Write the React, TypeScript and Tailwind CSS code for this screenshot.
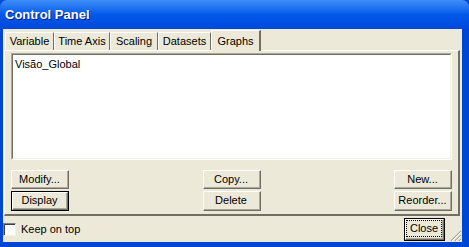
import React from "react";

const tabs = [
  { label: "Variable", w: "w-[49px]" },
  { label: "Time Axis", w: "w-[56px]" },
  { label: "Scaling", w: "w-[48px]" },
  { label: "Datasets", w: "w-[53px]" },
];

function Btn({ children, isDefault, focus }: { children: React.ReactNode; isDefault?: boolean; focus?: boolean }) {
  return (
    <div
      className={
        "flex h-full items-center justify-center bg-[#ECE9D8] " +
        (isDefault ? "border border-black" : "")
      }
    >
      <div className="flex h-full w-full items-center justify-center border-t border-l border-white border-r border-b border-r-[#716F64] border-b-[#716F64]">
        <div className="flex h-full w-full items-center justify-center border-r border-b border-[#ACA899]">
          {focus ? (
            <span className="border border-dotted border-black px-[3px] leading-[15px]">{children}</span>
          ) : (
            <span>{children}</span>
          )}
        </div>
      </div>
    </div>
  );
}

export default function App() {
  return (
    <div
      className="flex h-[247px] w-[469px] flex-col bg-[#0046D5] text-[11px] text-black"
      style={{ fontFamily: '"Liberation Sans", Arial, sans-serif' }}
    >
      <div className="flex h-[29px] shrink-0 items-center rounded-t-[7px] bg-gradient-to-b from-[#3D8EF8] via-[#0258EA] to-[#0048DC] pl-[5px]">
        <span className="text-[13px] font-bold text-white [text-shadow:1px_1px_0_#0A1E80]">Control Panel</span>
      </div>

      <div className="mb-[5px] ml-[3px] mr-[7px] flex flex-1 flex-col bg-[#ECE9D8]">
        {/* tab strip */}
        <div className="flex h-[21px] items-end pl-[2px]">
          {tabs.map((t) => (
            <div
              key={t.label}
              className={
                t.w +
                " flex h-[18px] items-center justify-center border-t border-l border-white border-r border-r-[#716F64]"
              }
            >
              {t.label}
            </div>
          ))}
          <div className="relative z-10 -mb-[1px] flex h-[21px] w-[50px] items-start justify-center border-t border-l border-white border-r-2 border-r-[#716F64] bg-[#ECE9D8] pt-[2px]">
            Graphs
          </div>
        </div>

        {/* tab panel */}
        <div className="ml-[1px] mr-[2px] flex h-[166px] flex-col border-t border-l border-white border-r-2 border-b-2 border-r-[#716F64] border-b-[#716F64] px-[6px] pt-[2px]">
          <div className="h-[107px] border-t border-l border-[#ACA899] border-r border-b border-r-white border-b-white">
            <div className="h-full border-t border-l border-[#716F64] border-r border-b border-r-[#F1EFE2] border-b-[#F1EFE2] bg-white px-[2px] pt-[1px]">
              Visão_Global
            </div>
          </div>
          <div className="mt-[10px] grid grid-cols-[58px_1fr_58px_1fr_58px] grid-rows-[19px_20px] gap-y-[2px]">
            <div className="col-start-1 row-start-1"><Btn>Modify...</Btn></div>
            <div className="col-start-3 row-start-1"><Btn>Copy...</Btn></div>
            <div className="col-start-5 row-start-1"><Btn>New...</Btn></div>
            <div className="col-start-1 row-start-2"><Btn isDefault>Display</Btn></div>
            <div className="col-start-3 row-start-2"><Btn>Delete</Btn></div>
            <div className="col-start-5 row-start-2"><Btn>Reorder...</Btn></div>
          </div>
        </div>

        {/* bottom bar */}
        <div className="relative flex flex-1 items-center justify-between">
          <div className="flex items-center gap-[5px]">
            <div className="h-[13px] w-[13px] border-t border-l border-r border-b border-t-[#808080] border-l-[#808080] border-r-[#F1EFE2] border-b-[#F1EFE2] bg-white">
              <div className="h-full w-full border-t border-l border-[#404040] border-r-0 border-b-0" />
            </div>
            <span>Keep on top</span>
          </div>
          <div className="mr-[17px] h-[23px] w-[41px]">
            <Btn isDefault focus>Close</Btn>
          </div>
          <svg className="absolute bottom-0 right-0" width="12" height="12" viewBox="0 0 12 12">
            <path d="M11 1 L1 11 M11 5 L5 11 M11 9 L9 11" stroke="#ACA899" strokeWidth="1.2" />
            <path d="M11 2 L2 11 M11 6 L6 11 M11 10 L10 11" stroke="#fff" strokeWidth="0.8" />
          </svg>
        </div>
      </div>
    </div>
  );
}
